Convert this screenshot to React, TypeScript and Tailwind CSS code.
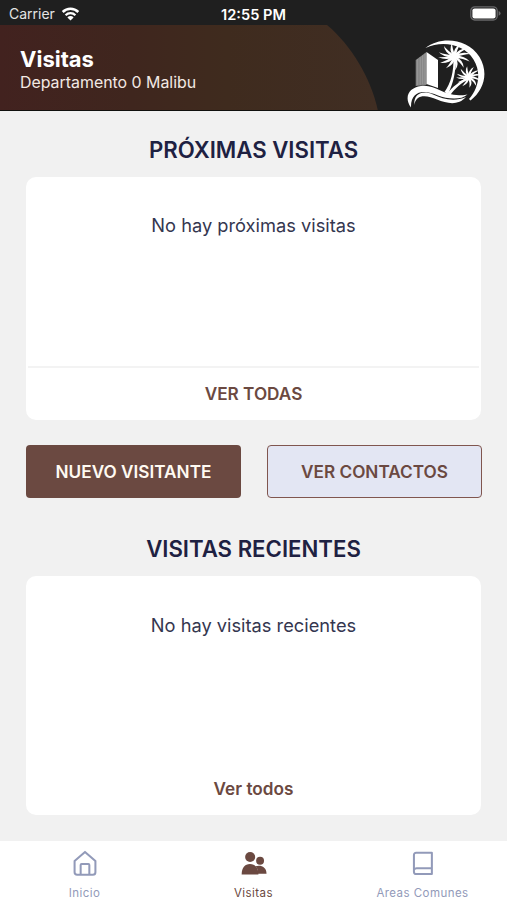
import type { ReactNode } from "react";

const PALM_ANGLES = [-166, -134, -102, -72, -42, -14, 18, 52, 84, 118, 148, 174];

function WifiIcon() {
  return (
    <svg width="19" height="14" viewBox="0 0 18 14" fill="none" stroke="white">
      <path d="M1.2 5 A11 11 0 0 1 16.8 5" strokeWidth="2.5" />
      <path d="M4.1 8.2 A7 7 0 0 1 13.9 8.2" strokeWidth="2.3" />
      <path d="M9 13.6 L5.9 10.4 A4.4 4.4 0 0 1 12.1 10.4 Z" fill="white" stroke="none" />
    </svg>
  );
}

function BatteryIcon() {
  return (
    <svg width="31" height="15" viewBox="0 0 31 15">
      <rect x="0.8" y="0.8" width="26.4" height="13.2" rx="4" fill="none" stroke="#68686a" strokeWidth="1.3" />
      <rect x="2.4" y="2.4" width="23.2" height="10" rx="2.2" fill="white" />
      <path d="M28.6 5 Q30.6 6 30.6 7.4 Q30.6 8.8 28.6 9.8 Z" fill="#68686a" />
    </svg>
  );
}

function Palm({ x, y, size }: { x: number; y: number; size: number }) {
  return (
    <g transform={`translate(${x} ${y}) scale(${size} ${size * 0.84})`} fill="white">
      {PALM_ANGLES.map((a) => (
        <path key={a} d="M0 -1 Q9 -4.2 15.5 1 Q9 -0.4 0 1.2 Z" transform={`rotate(${a})`} />
      ))}
    </g>
  );
}

function Logo() {
  return (
    <svg width="80" height="70" viewBox="0 0 80 70">
      {/* moon ring */}
      <path d="M18.5 8 C33 -3.5 60 -2.5 72.5 17 C82 33 77 50 63.5 60.5 L62 59 C72 48 74.5 32 66.5 19.5 C57 4.5 36 0 18.5 8 Z" fill="white" />
      {/* tower */}
      <path d="M8.7 20 L19.5 12 V45 L8.7 46 Z" fill="#858585" />
      <path d="M10.7 19 V45 M13.2 17.2 V45 M15.7 15.4 V44 M18 13.6 V44" stroke="#a8a8a8" strokeWidth="0.6" />
      <path d="M19.5 12 L31 20 V48 L19.5 44 Z" fill="white" />
      {/* palms */}
      <path d="M46.3 18 C47 31 44 43 37.5 52 L41 54 C46.5 43 49 31 48.5 18 Z" fill="white" />
      <path d="M61.5 37 C53 41 45 47 40 54 L43 55.5 C48 48 55 42.5 62 39 Z" fill="white" />
      <Palm x={47.5} y={16.5} size={1.05} />
      <Palm x={62} y={37} size={0.83} />
      {/* waves */}
      <path d="M4 67.5 C-3.5 57 2 47.5 14 46 C31 44 37 59 60.5 54.5 C54 60.5 40 59 31 55.5 C17 49 3.5 50.5 4 67.5 Z" fill="white" />
      <path d="M7.3 65 C6.5 53.5 16 50 26 54.5 C36 59.5 48 62 59 57 C51 66 40 63.5 30 59.5 C20 55 9 53.5 7.3 65 Z" fill="white" />
    </svg>
  );
}

function HomeIcon() {
  return (
    <svg width="26" height="28" viewBox="0 0 26 28" fill="none" stroke="currentColor" strokeWidth="2.1" strokeLinejoin="round">
      <path d="M2.2 11.5 L13 2 L23.8 11.5 V23 Q23.8 25.6 21.2 25.6 H4.8 Q2.2 25.6 2.2 23 Z" />
      <path d="M8.5 25.5 V15.5 Q8.5 14.5 9.5 14.5 H16.5 Q17.5 14.5 17.5 15.5 V25.5" />
    </svg>
  );
}

function PeopleIcon() {
  return (
    <svg width="28" height="28" viewBox="0 0 28 28" fill="currentColor">
      <circle cx="10" cy="7.3" r="5.2" />
      <circle cx="20.3" cy="11.1" r="4.1" />
      <path d="M1.2 25.3 C1.2 18.5 4.5 14.5 9.8 14.5 C13.3 14.5 15.6 16.1 17 18.5 C18 20.5 18.6 22.5 18.6 25.3 Z" />
      <path d="M15.6 16.9 C20.5 15.1 27 17.1 27 24.5 H18 C18 21 17.6 18.7 15.6 16.9 Z" />
    </svg>
  );
}

function BookIcon() {
  return (
    <svg width="22" height="28" viewBox="0 0 22 28" fill="none" stroke="currentColor" strokeWidth="2.1" strokeLinejoin="round">
      <path d="M4 2.9 H20.2 V24.9 H4 Q1.6 24.9 1.6 22.5 V5.3 Q1.6 2.9 4 2.9 Z" />
      <path d="M1.8 20.5 Q2.4 18.9 4.4 18.9 H20" />
    </svg>
  );
}

function SectionTitle({ children }: { children: ReactNode }) {
  return <h2 className="text-center text-[22.2px] leading-7 font-semibold text-[#1e2142]">{children}</h2>;
}

function Tab({ icon, label, active }: { icon: ReactNode; label: string; active?: boolean }) {
  return (
    <button className={`flex flex-1 flex-col items-center pt-[9px] ${active ? "text-[#6b4941]" : "text-[#929ab9]"}`}>
      {icon}
      <span className="mt-[9px] text-[11.5px] leading-[14px] tracking-[0.45px]">{label}</span>
    </button>
  );
}

export default function App() {
  return (
    <div className="flex h-[900px] w-[507px] flex-col overflow-hidden bg-[#f1f1f1] font-['Inter',sans-serif]">
      {/* Status bar */}
      <div className="flex h-[25px] items-center bg-[#1f1f1f] pt-[2px] pr-[6px] pl-[9px] text-[14px] text-white">
        <div className="flex flex-1 items-center gap-[6px]">
          <span className="text-[#e4e4e4]">Carrier</span>
          <WifiIcon />
        </div>
        <span className="pt-[2px] text-[14.6px] leading-5 font-semibold whitespace-nowrap">12:55 PM</span>
        <div className="flex flex-1 justify-end pl-[3px]">
          <BatteryIcon />
        </div>
      </div>

      {/* Header */}
      <header className="relative flex h-[86px] justify-between overflow-hidden border-b border-[#11110f] bg-[#1f1f1f] text-white">
        <svg className="absolute top-0 left-0" width="380" height="86" viewBox="0 0 380 86">
          <defs>
            <linearGradient id="header" x1="0" x2="1">
              <stop offset="0" stopColor="#42221f" />
              <stop offset="0.35" stopColor="#3f261e" />
              <stop offset="0.6" stopColor="#3f2b1e" />
              <stop offset="1" stopColor="#402e23" />
            </linearGradient>
          </defs>
          <path d="M0 0 H327 C351 20 371 53 378 86 H0 Z" fill="url(#header)" />
        </svg>
        <div className="relative pt-5 pl-5">
          <h1 className="text-[22px] leading-7 font-bold">Visitas</h1>
          <p className="text-[15.9px] leading-5 text-[#f3e9e4]">Departamento 0 Malibu</p>
        </div>
        <div className="relative pt-[15px] pr-[20px]">
          <Logo />
        </div>
      </header>

      <main className="flex-1 px-[26px] pt-[25px]">
        <SectionTitle>PRÓXIMAS VISITAS</SectionTitle>
        <div className="mt-[13px] flex h-[243px] flex-col rounded-[10px] bg-white">
          <p className="flex-1 pt-[36px] text-center text-[18.25px] leading-6 text-[#34364f]">No hay próximas visitas</p>
          <button className="mx-[2px] h-[54px] border-t-2 border-[#f3f3f3] text-[17.2px] leading-6 font-semibold text-[#6b4941]">VER TODAS</button>
        </div>

        <div className="mt-[25px] -mr-px grid grid-cols-2 gap-[26px] text-[17.2px] font-semibold">
          <button className="h-[53px] rounded-[4px] bg-[#6b4941] pt-px text-[#fffaf2]">NUEVO VISITANTE</button>
          <button className="h-[53px] rounded-[4px] border border-[#80564f] bg-[#e3e6f3] pt-px text-[#6b4941]">VER CONTACTOS</button>
        </div>

        <div className="mt-[37px]">
          <SectionTitle>VISITAS RECIENTES</SectionTitle>
        </div>
        <div className="mt-[13px] flex h-[239px] flex-col rounded-[10px] bg-white">
          <p className="flex-1 pt-[37px] text-center text-[18.25px] leading-6 text-[#34364f]">No hay visitas recientes</p>
          <button className="h-[52px] text-[17.2px] leading-6 font-semibold text-[#6b4941]">Ver todos</button>
        </div>
      </main>

      {/* Bottom tabs */}
      <nav className="flex h-[59px] bg-white">
        <Tab icon={<HomeIcon />} label="Inicio" />
        <Tab icon={<PeopleIcon />} label="Visitas" active />
        <Tab icon={<BookIcon />} label="Areas Comunes" />
      </nav>
    </div>
  );
}
